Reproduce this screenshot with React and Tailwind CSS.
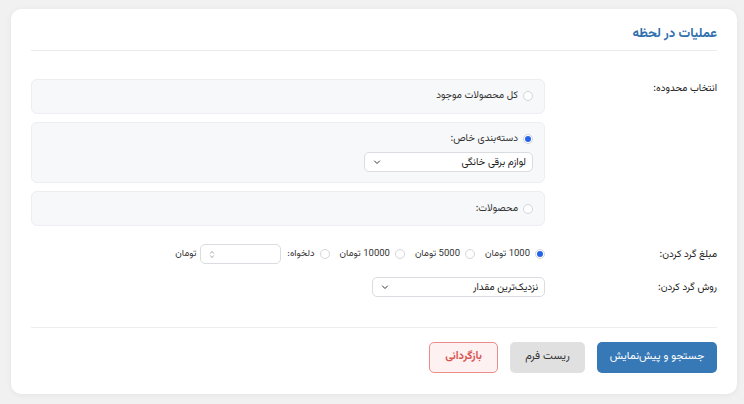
import { useState } from 'react';

const font = { fontFamily: 'Vazirmatn, "Noto Sans Arabic", "DejaVu Sans", sans-serif' };

function Radio({ checked }) {
	return (
		<span className="flex h-[10px] w-[10px] shrink-0 items-center justify-center rounded-full border border-[#d4d6da] bg-white">
			{checked ? <span className="h-[6px] w-[6px] rounded-full bg-[#2563eb]" /> : null}
		</span>
	);
}

function Chevron() {
	return (
		<svg width="8" height="8" viewBox="0 0 16 16" fill="none" stroke="#333" strokeWidth="2" strokeLinecap="round" strokeLinejoin="round">
			<path d="M3 6l5 5 5-5" />
		</svg>
	);
}

function SelectBox({ value, className }) {
	return (
		<div className={`flex h-[20px] items-center justify-between rounded-[5px] border border-[#d9dce0] bg-white pl-[8px] pr-[6px] text-[10px] text-[#222] ${className}`}>
			<span>{value}</span>
			<Chevron />
		</div>
	);
}

const amounts = ['1000 تومان', '5000 تومان', '10000 تومان'];

export default function App() {
	const [amount] = useState(0);
	return (
		<div dir="rtl" style={font} className="min-h-[404px] bg-[#f1f1f1] pb-[10px] pl-[11px] pr-[7px] pt-[9px]">
			<div className="rounded-[10px] bg-white px-[20px] pb-[21px] shadow-[0_1px_6px_rgba(0,0,0,0.06)]">
				<div className="border-b border-[#e9ebee] pb-[6px] pt-[15px]">
					<h1 className="text-[13px] font-bold leading-[20px] text-[#2f6fad]">عملیات در لحظه</h1>
				</div>

				<div className="flex flex-col pb-[30px] pt-[28px]">
					<div className="flex">
						<div className="w-[172px] shrink-0 pt-[2px] text-[10px] text-[#222]">انتخاب محدوده:</div>
						<div className="flex flex-1 flex-col gap-[8px]">
							<div className="flex h-[35px] items-center gap-[5px] rounded-[6px] border border-[#eceef1] bg-[#f7f8fa] px-[11px] pb-[2px] text-[10px] text-[#333]">
								<Radio />
								<span>کل محصولات موجود</span>
							</div>
							<div className="flex flex-col gap-[6px] rounded-[6px] border border-[#eceef1] bg-[#f7f8fa] px-[11px] pb-[10px] pt-[8px] text-[10px] text-[#333]">
								<div className="flex items-center gap-[5px]">
									<Radio checked />
									<span>دسته‌بندی خاص:</span>
								</div>
								<SelectBox value="لوازم برقی خانگی" className="w-[169px]" />
							</div>
							<div className="flex h-[35px] items-center gap-[5px] rounded-[6px] border border-[#eceef1] bg-[#f7f8fa] px-[11px] text-[10px] text-[#333]">
								<Radio />
								<span>محصولات:</span>
							</div>
						</div>
					</div>

					<div className="mt-[18px] flex items-center">
						<div className="w-[172px] shrink-0 text-[10px] text-[#222]">مبلغ گرد کردن:</div>
						<div className="flex flex-1 items-center gap-[10px] text-[9.5px] text-[#333]">
							{amounts.map((a, i) => (
								<div key={a} className="flex items-center gap-[5px]">
									<Radio checked={amount === i} />
									<span>{a}</span>
								</div>
							))}
							<div className="flex items-center gap-[5px]">
								<Radio />
								<span>دلخواه:</span>
								<div className="mr-[1px] flex h-[20px] w-[81px] items-center justify-end rounded-[5px] border border-[#d9dce0] bg-white pl-[8px]">
									<svg width="6" height="9" viewBox="0 0 6 10" fill="none" stroke="#999" strokeWidth="0.9">
										<path d="M1 4l2-2.5L5 4M1 6l2 2.5L5 6" />
									</svg>
								</div>
								<span className="mr-[-1px]">تومان</span>
							</div>
						</div>
					</div>

					<div className="mt-[13px] flex items-center">
						<div className="w-[172px] shrink-0 text-[10px] text-[#222]">روش گرد کردن:</div>
						<SelectBox value="نزدیک‌ترین مقدار" className="w-[173px]" />
					</div>
				</div>

				<div className="flex gap-[12px] border-t border-[#eceef1] pt-[14px] text-[11px]">
					<button className="h-[31px] w-[120px] rounded-[5px] bg-[#3679b6] text-white">جستجو و پیش‌نمایش</button>
					<button className="h-[31px] w-[75px] rounded-[5px] bg-[#e0e0e0] text-[#333]">ریست فرم</button>
					<button className="h-[31px] w-[69px] rounded-[5px] border border-[#ec8c8c] bg-[#fdf1f1] font-bold text-[#d9534f]">بازگردانی</button>
				</div>
			</div>
		</div>
	);
}
